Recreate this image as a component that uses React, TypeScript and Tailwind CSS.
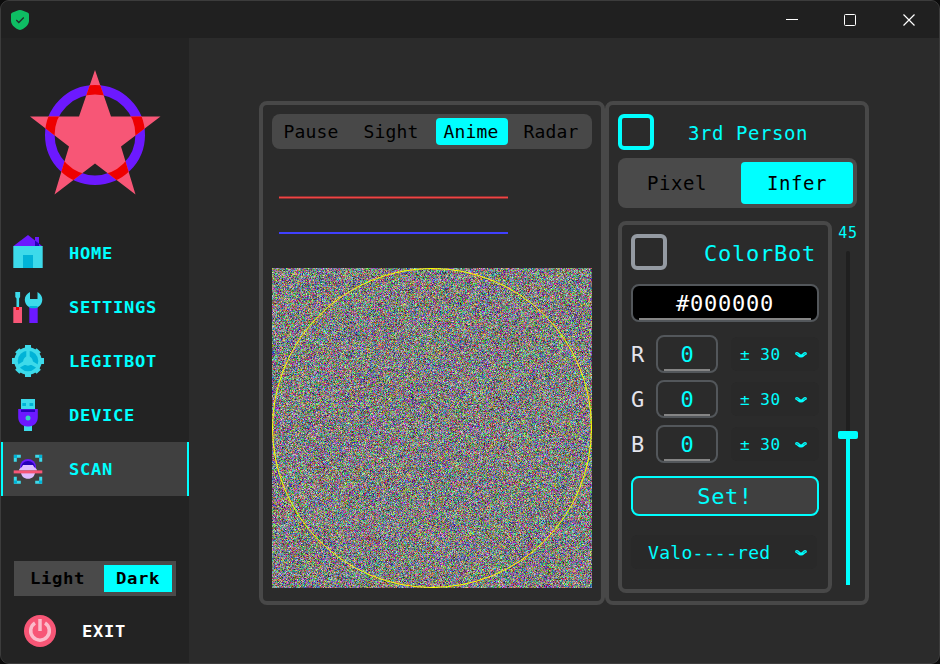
import { useEffect, useRef, type ReactNode } from "react";

function Logo() {
  const star =
    "95,70 111,116.5 160.5,116.5 121,146.5 135.5,194.5 95,163.5 54.5,194.5 69,146.5 30,116.5 79,116.5";
  return (
    <svg width="134" height="128" viewBox="28 68 134 128">
      <defs>
        <clipPath id="star">
          <polygon points={star} />
        </clipPath>
      </defs>
      <circle cx="95" cy="135" r="45.2" fill="none" stroke="#6c19ff" strokeWidth="9.6" />
      <polygon points={star} fill="#f75676" />
      <circle cx="95" cy="135" r="45.2" fill="none" stroke="#ee0000" strokeWidth="9.6" clipPath="url(#star)" />
    </svg>
  );
}

function HomeIcon() {
  return (
    <svg width="32" height="36" viewBox="12 235 32 36">
      <path d="M13.5 246 28 235l14 11z" fill="#6c19ff" />
      <path d="M35 237h4v9h-4z" fill="#6c19ff" />
      <path d="M35 240.500l4 3v2.500h-4z" fill="#2600b8" />
      <path d="M13.300 246h29.400v22H13.300z" fill="#3ddaea" />
      <path d="M23 255h10v13H23z" fill="#00b3d7" />
    </svg>
  );
}

function ToolsIcon() {
  return (
    <svg width="32" height="36" viewBox="12 289 32 36">
      <path d="M15.3 292h4.800v5l-1 1.500V309h-2.600V298.500l-1.200-1.500z" fill="#3ddaea" />
      <path d="M13.300 307h8.700v16h-8.700z" fill="#f75676" />
      <path d="M16 307h3v3h-3z" fill="#e00" />
      <path d="M29.300 306h8.400v17h-8.400z" fill="#6c19ff" />
      <path d="M30 292v7h7.500v-7c3 1.500 4.800 4.500 4.800 7.500 0 5-3.800 8.500-8.700 8.500s-8.800-3.500-8.800-8.500c0-3 2-6 5.200-7.500z" fill="#3ddaea" />
      <path d="M29.500 306h8v1.700c-2.500.8-5.500.8-8 0z" fill="#00b3d7" />
    </svg>
  );
}

function GearIcon() {
  return (
    <svg width="32" height="36" viewBox="12 343 32 36">
      <g fill="#3ddaea">
        <circle cx="28" cy="361" r="13.700" />
        <path d="M25 345h6v32h-6z" />
        <path d="M12 358h32v6H12z" />
        <path d="M25 345.800h6v30.400h-6z" transform="rotate(45 28 361)" />
        <path d="M25 345.800h6v30.400h-6z" transform="rotate(-45 28 361)" />
      </g>
      <circle cx="28" cy="361" r="7.500" fill="none" stroke="#00b3d7" strokeWidth="5.600" />
      <path d="M26.300 350h3.400v7l3.300 4.500 6.500 4-1.700 3-6.300-3.500h-7l-6.300 3.500-1.700-3 6.500-4 3.300-4.500z" fill="#3ddaea" />
    </svg>
  );
}

function UsbIcon() {
  return (
    <svg width="32" height="36" viewBox="12 397 32 36">
      <path d="M21 399h14v12H21zM24 425h8v6h-8z" fill="#3ddaea" />
      <path d="M22.300 403h3.700v3h-3.700zM29.500 403h3.700v3h-3.700z" fill="#00b3d7" />
      <path d="M18.200 409h19.600v8.500c0 5-4 9-9 9h-1.600c-5 0-9-4-9-9z" fill="#6c19ff" />
      <path d="M21 409.500h14v2.500H21z" fill="#2600b8" />
      <circle cx="28" cy="418" r="2.500" fill="#30d5c0" />
    </svg>
  );
}

function ScanIcon() {
  return (
    <svg width="32" height="36" viewBox="12 451 32 36">
      <path d="M20.800 456.300h-5.500v5.500M35.200 456.300h5.500v5.500M20.800 482.200h-5.500v-5.500M35.200 482.200h5.500v-5.500" fill="none" stroke="#3ddaea" strokeWidth="3" />
      <path d="M14 455h3v3h-3zM39 455h3v3h-3zM14 480.500h3v3h-3zM39 480.500h3v3h-3z" fill="#00b3d7" />
      <path d="M20 470v-3a8 8 0 0 1 16 0v3z" fill="#6c19ff" />
      <path d="M21 468c0-4 3-7 7-7s7 3 7 7z" fill="#2600b8" />
      <path d="M19 470.500c0-2.500 3-2.500 4-5.500h10c1 3 4 3 4 5.500z" fill="#dfbdff" />
      <path d="M21 472h14c0 4-3 6.800-7 6.800s-7-2.800-7-6.800z" fill="#dfbdff" />
      <path d="M13.700 470.400h28.600v3H13.700z" fill="#f75676" />
    </svg>
  );
}

function PowerIcon() {
  return (
    <svg width="32" height="32" viewBox="0 0 32 32">
      <circle cx="16" cy="16" r="16" fill="#f75676" />
      <path d="M11 8a9.300 9.300 0 1 0 10 0M16 4v12" fill="none" stroke="#fbbccb" strokeWidth="3.500" />
    </svg>
  );
}

function Chevron() {
  return (
    <svg width="14" height="8" viewBox="0 0 14 8" className="block">
      <path d="M2.700 2.500C4 2.500 5 5 7 5s3-2.500 4.300-2.500" fill="none" stroke="#00ffff" strokeWidth="3.200" strokeLinecap="round" />
      <path d="M2.800 2.600 4.200 3.400M11.200 2.600 9.800 3.400" stroke="#1c7c7c" strokeWidth=".9" strokeLinecap="round" />
    </svg>
  );
}

function NavItem({ label, icon, active = false }: { label: string; icon: ReactNode; active?: boolean }) {
  return (
    <div
      className={`flex h-[54px] items-center border-x-2 pl-[9px] ${
        active ? "border-[#00ffff] bg-[#404040]" : "border-transparent"
      }`}
    >
      {icon}
      <span className="ml-[25px] origin-left scale-x-[1.14] pt-0.5 text-[15px] font-bold leading-none tracking-[0.62px] text-[#00ffff]">
        {label}
      </span>
    </div>
  );
}

function Noise() {
  const ref = useRef<HTMLCanvasElement>(null);
  useEffect(() => {
    const ctx = ref.current?.getContext("2d");
    if (!ctx) return;
    const image = ctx.createImageData(320, 320);
    let seed = 48271;
    const random = () => {
      seed = (seed + 0x6d2b79f5) | 0;
      let t = Math.imul(seed ^ (seed >>> 15), 1 | seed);
      t = (t + Math.imul(t ^ (t >>> 7), 61 | t)) ^ t;
      return ((t ^ (t >>> 14)) >>> 0) / 4294967296;
    };
    const level = () => Math.round(((random() + random()) / 2) * 255);
    for (let i = 0; i < image.data.length; i += 4) {
      image.data[i] = level();
      image.data[i + 1] = level();
      image.data[i + 2] = level();
      image.data[i + 3] = 255;
    }
    ctx.putImageData(image, 0, 0);
    ctx.strokeStyle = "#ffff00";
    ctx.lineWidth = 1;
    ctx.beginPath();
    ctx.arc(160, 160, 159.5, 0, Math.PI * 2);
    ctx.stroke();
  }, []);
  return <canvas ref={ref} width={320} height={320} className="mt-[34px] block size-[320px]" />;
}

function Channel({ name }: { name: string }) {
  return (
    <div className="flex h-[38px] items-center">
      <span className="w-[25px] pt-0.5 text-[22px] leading-none text-[#e4e4ec]">{name}</span>
      <div className="flex h-[38px] w-[62px] flex-col items-center justify-between rounded-lg border-2 border-[#53575b] px-1.5">
        <span className="pt-1 text-[22px] leading-[28px] text-[#00ffff]">0</span>
        <div className="h-0.5 w-full shrink-0 bg-[#858585]" />
      </div>
      <div className="ml-[13px] flex h-[34px] w-[88px] items-center rounded-md bg-[#292929] pl-[9px] pt-0.5">
        <span className="w-[54px] whitespace-pre text-[16px] leading-none tracking-[0.5px] text-[#00ffff]">± 30</span>
        <Chevron />
      </div>
    </div>
  );
}

export default function App() {
  return (
    <div className="h-[664px] w-[940px] overflow-hidden bg-[#0c0c0c] font-['DejaVu_Sans_Mono',monospace]">
      <div className="flex h-full flex-col overflow-hidden rounded-[9px] border border-[#3c3c3c] bg-[#2b2b2b]">
        <header className="flex h-[37px] shrink-0 items-center bg-[#202020] pl-[9px]">
          <svg width="20" height="22" viewBox="0 0 20 22">
            <path d="M8.300 1.300q1.700-.8 3.400 0L17.500 3.500Q19 4 19 5.500V11.500C19 15.500 16 18.500 11.800 20.500q-1.800.8-3.600 0C4 18.500 1 15.500 1 11.500V5.500Q1 4 2.500 3.500z" fill="#0ebd63" />
            <path d="m6.300 11 2.500 2.500 5-5" fill="none" stroke="#20302a" strokeWidth="1.300" />
          </svg>
          <svg className="ml-auto mr-[22px]" width="132" height="14" viewBox="785 12 132 14" fill="none" stroke="#fff">
            <path d="M786 18.500h12" />
            <rect x="844.500" y="13.500" width="11" height="11" rx="1" />
            <path d="m903.500 13.500 11 11m0-11-11 11" strokeWidth="1.200" />
          </svg>
        </header>

        <div className="flex min-h-0 flex-1">
          <aside className="flex w-[188px] shrink-0 flex-col bg-[#232323]">
            <div className="flex h-[188px] justify-center pt-[30px]">
              <Logo />
            </div>
            <nav>
              <NavItem label="HOME" icon={<HomeIcon />} />
              <NavItem label="SETTINGS" icon={<ToolsIcon />} />
              <NavItem label="LEGITBOT" icon={<GearIcon />} />
              <NavItem label="DEVICE" icon={<UsbIcon />} />
              <NavItem label="SCAN" icon={<ScanIcon />} active />
            </nav>
            <div className="ml-[13px] mt-[65px] flex h-[35px] w-[162px] bg-[#4a4a4a] p-1 text-[16px] font-bold leading-[27px] tracking-[0.56px] text-black">
              <span className="w-[86px] pl-3">
                <span className="inline-block origin-left scale-x-[1.08]">Light</span>
              </span>
              <span className="w-[68px] bg-[#00ffff] pl-3">
                <span className="inline-block origin-left scale-x-[1.08]">Dark</span>
              </span>
            </div>
            <div className="ml-[23px] mt-[19px] flex items-center">
              <PowerIcon />
              <span className="ml-[26px] origin-left scale-x-[1.14] pt-0.5 text-[15px] font-bold leading-none tracking-[0.62px] text-white">
                EXIT
              </span>
            </div>
          </aside>

          <main className="flex pl-[70px] pt-[63px]">
            <section className="h-[504px] w-[346px] rounded-lg border-4 border-[#484848] px-[9px] pt-[9px]">
              <div className="flex h-[35px] w-[320px] gap-2 rounded-lg bg-[#484848] p-1 text-center text-[18px] leading-[27px] tracking-[0.16px] text-black">
                <span className="w-[72px] pr-0.5">Pause</span>
                <span className="w-[72px] pr-0.5">Sight</span>
                <span className="w-[72px] rounded-sm bg-[#00ffff] pr-0.5">Anime</span>
                <span className="w-[72px] pr-0.5">Radar</span>
              </div>
              <div className="ml-[7px] mt-[47px] h-[3px] w-[229px] border-y border-[#8c3232] bg-[#f04444]" />
              <div className="ml-[7px] mt-[33px] h-0.5 w-[229px] bg-[#4040ff]" />
              <Noise />
            </section>

            <section className="h-[504px] w-[264px] rounded-lg border-4 border-[#484848] pl-[9px] pt-[9px]">
              <div className="flex items-center">
                <div className="size-9 rounded-md border-4 border-[#00ffff]" />
                <span className="ml-[34px] pt-0.5 text-[19px] leading-none tracking-[0.56px] text-[#00ffff]">3rd Person</span>
              </div>
              <div className="mt-2 flex h-[50px] w-[239px] rounded-lg bg-[#4a4a4a] p-1 text-center text-[19px] leading-[42px] tracking-[0.56px] text-black">
                <span className="w-[119px] pr-[9px]">Pixel</span>
                <span className="w-[112px] rounded-sm bg-[#00ffff]">Infer</span>
              </div>

              <div className="mt-[13px] flex">
                <div className="h-[372px] w-[214px] rounded-lg border-4 border-[#484848] px-[9px] pt-[9px]">
                  <div className="flex items-center">
                    <div className="size-9 rounded-md border-4 border-[#949aa2]" />
                    <span className="ml-[37px] pt-[3px] text-[22px] leading-none tracking-[0.76px] text-[#00ffff]">ColorBot</span>
                  </div>
                  <div className="mt-3.5 flex h-[38px] w-[188px] flex-col items-center justify-between rounded-lg border-2 border-[#53575b] bg-black px-1.5">
                    <span className="pt-1 text-[22px] leading-[28px] tracking-[0.76px] text-white">#000000</span>
                    <div className="h-0.5 w-full shrink-0 bg-[#858585]" />
                  </div>
                  <div className="mt-[13px] flex flex-col gap-[7px]">
                    <Channel name="R" />
                    <Channel name="G" />
                    <Channel name="B" />
                  </div>
                  <div className="mt-[13px] h-10 w-[188px] rounded-lg border-2 border-[#00ffff] bg-[#404040] text-center text-[22px] leading-[37px] tracking-[0.6px] text-[#00ffff]">
                    Set!
                  </div>
                  <div className="mt-[19px] flex h-[34px] w-[186px] items-center rounded-md bg-[#292929] pl-[17px] pt-0.5">
                    <span className="w-[146px] text-[18px] leading-none tracking-[0.3px] text-[#00ffff]">Valo----red</span>
                    <Chevron />
                  </div>
                </div>

                <div className="ml-1.5 flex w-5 flex-col items-center pt-[5px]">
                  <span className="text-[15px] leading-[15px] tracking-[0.8px] text-[#00ffff]">45</span>
                  <div className="mt-2.5 h-[180px] w-1 rounded-t-sm bg-[#1f1f1f]" />
                  <div className="h-2 w-5 rounded-[2px] bg-[#00ffff]" />
                  <div className="h-[146px] w-1 bg-[#00ffff]" />
                </div>
              </div>
            </section>
          </main>
        </div>
      </div>
    </div>
  );
}
